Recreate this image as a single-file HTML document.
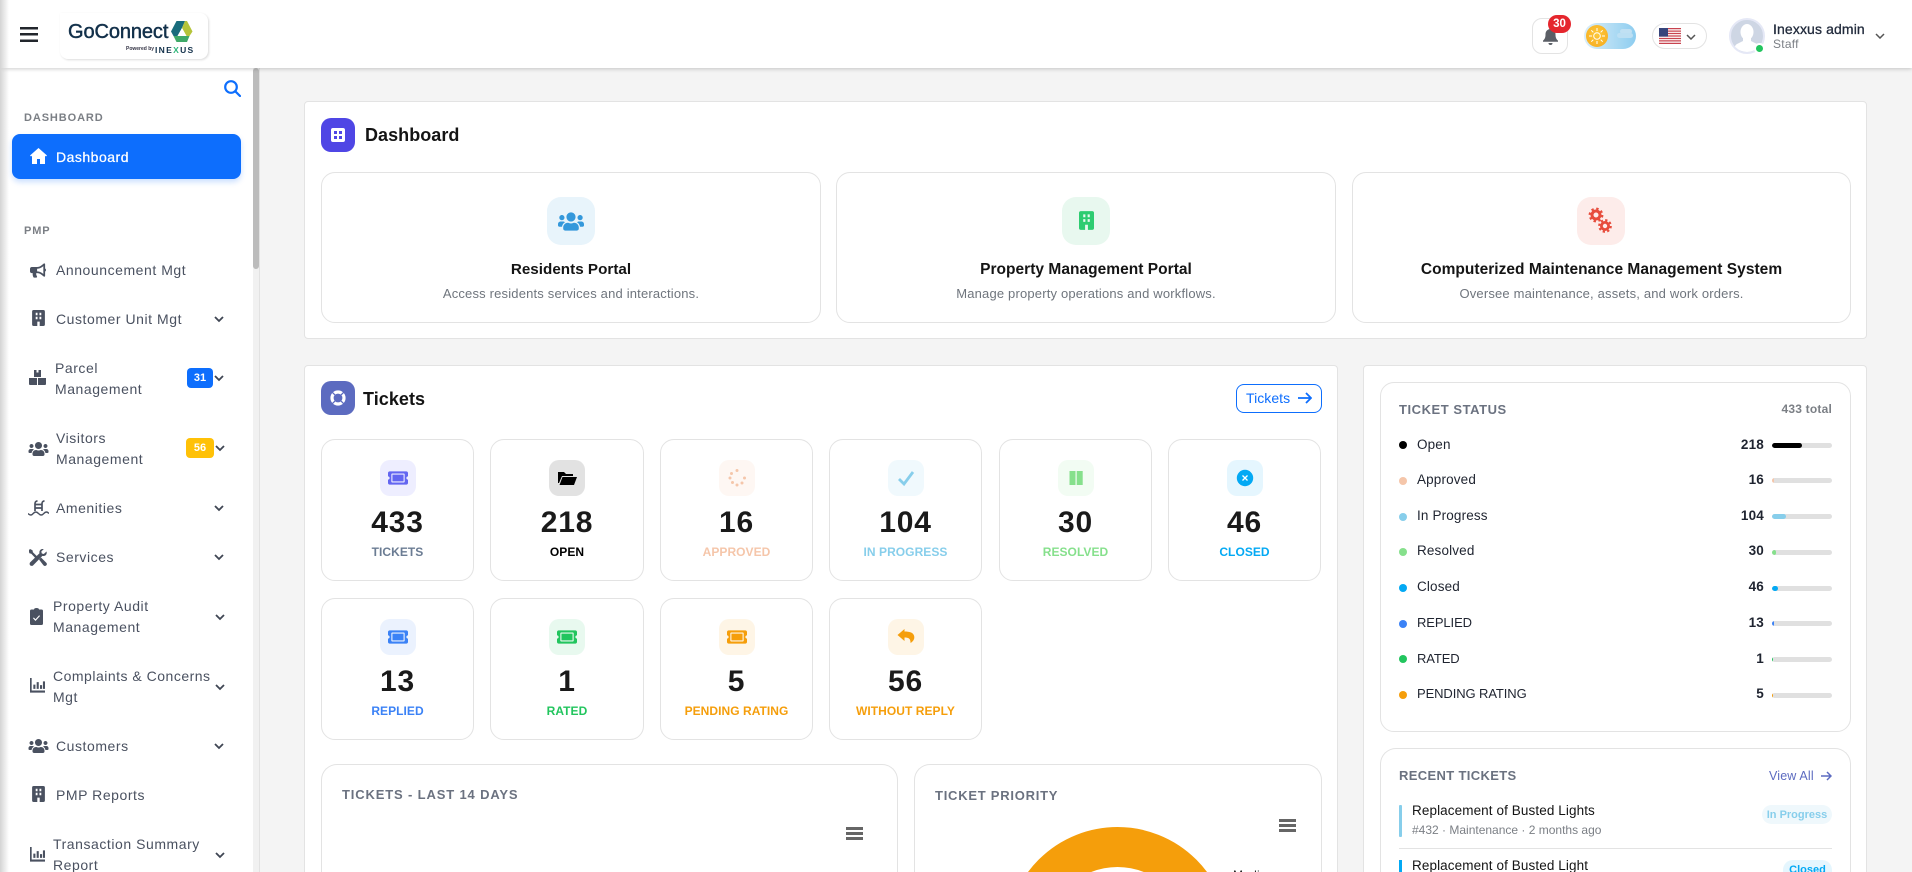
<!DOCTYPE html>
<html lang="en">
<head>
<meta charset="utf-8">
<title>GoConnect Dashboard</title>
<style>
*{box-sizing:border-box;margin:0;padding:0}
html,body{width:1912px;height:872px;overflow:hidden;background:#f4f4f4;font-family:"Liberation Sans",Arial,sans-serif;color:#111}
#root{position:relative;width:1912px;height:872px;overflow:hidden;background:#f4f4f4}
.a{position:absolute}
.t{position:absolute;white-space:nowrap}
#hd{position:absolute;left:0;top:0;width:1912px;height:68px;background:#fff;box-shadow:0 1px 4px rgba(0,0,0,.2);z-index:5}
#sb{position:absolute;left:0;top:68px;width:260px;height:804px;background:#fff;border-right:1px solid #e2e2e2}
#fade{position:absolute;left:0;top:0;width:9px;height:872px;background:linear-gradient(90deg,#d4d4d4,rgba(255,255,255,0));z-index:6}
.side{position:absolute;left:56px;font-size:14px;line-height:21px;color:#4a5160;letter-spacing:.55px;white-space:nowrap}
.sec{position:absolute;left:24px;font-size:11px;line-height:14px;font-weight:700;letter-spacing:.9px;color:#7b7f85}
.ic{position:absolute;fill:#4a5160}
.chev{position:absolute;width:12px;height:8px;fill:none;stroke:#3f4653;stroke-width:1.8}
.card{position:absolute;background:#fff;border:1px solid #e3e3e3;border-radius:4px}
.open{border-bottom:0;border-radius:4px 4px 0 0}
.in{position:absolute;background:#fff;border:1px solid #e3e3e3;border-radius:14px}
.in2{border-bottom:0;border-radius:16px 16px 0 0}
.ttl{position:absolute;font-size:18px;line-height:24px;font-weight:700;color:#141414;white-space:nowrap;letter-spacing:.05px}
.ibox{position:absolute;width:48px;height:48px;border-radius:14px;top:24px}
.pt{position:absolute;left:0;right:0;top:87px;text-align:center;font-size:15.5px;line-height:20px;font-weight:700;color:#141414;letter-spacing:.03px}
.pd{position:absolute;left:0;right:0;top:112px;text-align:center;font-size:13px;line-height:18px;color:#6f757d;letter-spacing:.18px}
.st{position:absolute;background:#fff;border:1px solid #e3e3e3;border-radius:14px;width:153px;height:142px;text-align:center}
.sb{position:absolute;top:20px;left:50%;margin-left:-18px;width:36px;height:36px;border-radius:10px}
.sb svg{position:absolute;left:8px;top:8px;width:20px;height:20px}
.n{position:absolute;left:0;right:0;top:65px;font-size:30px;line-height:36px;font-weight:700;color:#1a1a1a;letter-spacing:.8px}
.l{position:absolute;left:0;right:0;top:104px;font-size:12px;line-height:16px;font-weight:700;letter-spacing:.05px}
.h{position:absolute;font-size:13px;line-height:16px;font-weight:700;letter-spacing:.75px;color:#6b7280;white-space:nowrap}
.dot{position:absolute;left:1399px;width:8px;height:8px;border-radius:50%}
.rl{position:absolute;left:1417px;font-size:13.5px;line-height:18px;color:#1f2430;white-space:nowrap;letter-spacing:.15px}
.up{font-size:13px;letter-spacing:-.1px}
.rn{position:absolute;right:148px;font-size:13.5px;line-height:18px;font-weight:700;color:#1f2430;letter-spacing:.2px}
.bar{position:absolute;left:1772px;width:60px;height:5px;border-radius:3px;background:#e0e0e0;overflow:hidden}
.bar i{display:block;height:5px;border-radius:3px}
.menu{position:absolute;width:17px;height:13px;background:linear-gradient(#666 0 3px,transparent 3px 5px,#666 5px 8px,transparent 8px 10px,#666 10px 13px)}
</style>
</head>
<body>
<svg width="0" height="0" style="position:absolute">
<defs>
<symbol id="tk" viewBox="0 0 576 512"><path d="M128 160h320v192H128V160zm400 96c0 26.51 21.49 48 48 48v96c0 26.51-21.49 48-48 48H48c-26.51 0-48-21.49-48-48v-96c26.51 0 48-21.49 48-48s-21.49-48-48-48v-96c0-26.51 21.49-48 48-48h480c26.51 0 48 21.49 48 48v96c-26.51 0-48 21.49-48 48zm-48-104c0-13.255-10.745-24-24-24H120c-13.255 0-24 10.745-24 24v208c0 13.255 10.745 24 24 24h336c13.255 0 24-10.745 24-24V152z"/></symbol>
<symbol id="us" viewBox="0 0 640 512"><path d="M96 224c35.3 0 64-28.7 64-64s-28.7-64-64-64-64 28.7-64 64 28.7 64 64 64zm448 0c35.3 0 64-28.7 64-64s-28.7-64-64-64-64 28.7-64 64 28.7 64 64 64zm32 32h-64c-17.6 0-33.5 7.1-45.1 18.6 40.3 22.1 68.9 62 75.1 109.4h66c17.7 0 32-14.3 32-32v-32c0-35.3-28.7-64-64-64zm-256 0c61.9 0 112-50.1 112-112S381.9 32 320 32 208 82.1 208 144s50.1 112 112 112zm76.8 32h-8.3c-20.8 10-43.9 16-68.5 16s-47.6-6-68.5-16h-8.3C179.6 288 128 339.6 128 403.2V432c0 26.5 21.5 48 48 48h288c26.5 0 48-21.5 48-48v-28.8c0-63.6-51.6-115.2-115.2-115.2zm-223.7-13.4C161.5 263.1 145.6 256 128 256H64c-35.3 0-64 28.7-64 64v32c0 17.7 14.3 32 32 32h65.9c6.3-47.4 34.9-87.3 75.2-109.4z"/></symbol>
<symbol id="bd" viewBox="0 0 16 20"><path fill-rule="evenodd" d="M2 0h12a2 2 0 0 1 2 2v16a2 2 0 0 1-2 2H2a2 2 0 0 1-2-2V2a2 2 0 0 1 2-2zM4.500 3.500v3h2.300v-3zM9.200 3.500v3h2.300v-3zM4.500 8.500v3h2.300v-3zM9.200 8.500v3h2.300v-3zM6.500 14.500V20h3v-5.500z"/></symbol>
<symbol id="ch" viewBox="0 0 20 18"><path fill-rule="evenodd" d="M1 0h2v15h16v2.500H1z M5 8h2.500v5H5z M9 5h2.500v8H9z M13 8.500h2.500V13H13z M16.500 4H19v9h-2.500z"/></symbol>
</defs>
</svg>
<div id="root">

<!-- HEADER -->
<div id="hd">
  <div class="a" style="left:20px;top:27px;width:18px;height:15px;background:linear-gradient(#22262c 0 2.5px,transparent 2.5px 6px,#22262c 6px 8.5px,transparent 8.5px 12.5px,#22262c 12.5px 15px)"></div>
  <div class="a" style="left:60px;top:13px;width:148px;height:46px;background:#fff;border-radius:0 8px 8px 8px;box-shadow:1px 1px 2px rgba(0,0,0,.14)"></div>
  <div class="t" style="left:68px;top:18px;font-size:20px;line-height:28px;font-weight:400;color:#12304a;-webkit-text-stroke:.45px #12304a;letter-spacing:-.1px">GoConnect</div>
  <svg class="a" style="left:171px;top:21px" width="21.5" height="21" viewBox="0 0 21.5 21">
    <path d="M5.500 0H14L11 7 6.500 15H2.500L0 10.500z" fill="#186c7c"/>
    <path d="M14 0h2l5.500 10.500L18.500 15h-3L11 7z" fill="#b5c43a"/>
    <path d="M2.500 15h16L16 21H5.500z" fill="#3fa968"/>
    <path d="M11 7l4.500 8h-9z" fill="#fff"/>
  </svg>
  <div class="t" style="left:126px;top:46px;font-size:5px;line-height:7px;font-weight:700;color:#334">Powered by</div>
  <div class="t" style="left:155px;top:44px;font-size:8.500px;line-height:12px;font-weight:700;letter-spacing:1.3px;color:#12304a">INE<span style="color:#2fb67a">X</span>US</div>

  <div class="a" style="left:1532px;top:18px;width:36px;height:36px;border:1px solid #e3e3e3;border-radius:10px"></div>
  <svg class="a" style="left:1543px;top:28px" width="15" height="17" viewBox="0 0 15 17"><path d="M7.500 0c.8 0 1.300.6 1.300 1.300C11.300 1.900 12.500 4 12.500 6.500c0 3.500 1 4.800 2.500 6.200v1H0v-1c1.500-1.400 2.500-2.700 2.500-6.200 0-2.500 1.200-4.600 3.700-5.200C6.200.6 6.700 0 7.500 0z" fill="#5b5f66"/><path d="M5.500 15h4a2 2 0 0 1-4 0z" fill="#5b5f66"/></svg>
  <div class="a" style="left:1548px;top:15px;width:23px;height:18px;border-radius:9px;background:#e5262d;color:#fff;font-size:11.500px;line-height:18px;font-weight:700;text-align:center">30</div>

  <div class="a" style="left:1584px;top:23px;width:52px;height:26px;border-radius:13px;background:linear-gradient(90deg,#dbeef8,#8dcdf0)"></div>
  <div class="a" style="left:1586px;top:25px;width:22px;height:22px;border-radius:50%;background:radial-gradient(circle at 50% 40%,#fdc93a,#f6a91f)"></div>
  <svg class="a" style="left:1589px;top:28px" width="16" height="16" viewBox="0 0 16 16" fill="none" stroke="#fff" stroke-width="1"><circle cx="8" cy="8" r="3.300"/><path d="M8 0v3M8 13v3M0 8h3M13 8h3M2.300 2.300l2 2M11.700 11.700l2 2M2.300 13.700l2-2M11.700 4.300l2-2"/></svg>
  <div class="a" style="left:1620px;top:29px;width:12px;height:5px;border-radius:3px;background:#c0e0f3"></div>
  <div class="a" style="left:1617px;top:33px;width:16px;height:5px;border-radius:3px;background:#bcdff3"></div>

  <div class="a" style="left:1652px;top:23px;width:55px;height:26px;border:1px solid #e3e3e3;border-radius:13px"></div>
  <svg class="a" style="left:1659px;top:28px" width="22" height="16" viewBox="0 0 22 16">
    <rect width="22" height="16" rx="1" fill="#fff"/>
    <path d="M0 0h22v1.230H0zM0 2.460h22v1.230H0zM0 4.920h22v1.230H0zM0 7.380h22v1.230H0zM0 9.840h22v1.230H0zM0 12.300h22v1.230H0zM0 14.770h22V16H0z" fill="#c8434f"/>
    <rect width="9" height="8.600" fill="#37457c"/>
  </svg>
  <svg class="a" style="left:1686px;top:34px" width="10" height="6" viewBox="0 0 10 6" fill="none" stroke="#555" stroke-width="1.500"><path d="M1 1l4 4 4-4"/></svg>

  <div class="a" style="left:1729px;top:18px;width:36px;height:36px;border-radius:50%;background:#ced6e4;border:2px solid #e5e8f6;overflow:hidden">
    <svg width="32" height="32" viewBox="0 0 32 32" style="display:block"><ellipse cx="16" cy="12" rx="6.500" ry="8" fill="#fff"/><path d="M12 17h8v4l6 3c2 1 3 4 3 8H3c0-4 1-7 3-8l6-3z" fill="#fff"/></svg>
  </div>
  <div class="a" style="left:1754px;top:43px;width:11px;height:11px;border-radius:50%;background:#22c55e;border:2px solid #fff"></div>
  <div class="t" style="left:1773px;top:19px;font-size:14px;line-height:20px;font-weight:400;color:#222b3c;-webkit-text-stroke:.3px #222b3c;letter-spacing:.12px">Inexxus admin</div>
  <div class="t" style="left:1773px;top:36px;font-size:12px;line-height:16px;color:#7b7f85;letter-spacing:.25px">Staff</div>
  <svg class="a" style="left:1875px;top:33px" width="10" height="6" viewBox="0 0 10 6" fill="none" stroke="#555" stroke-width="1.500"><path d="M1 1l4 4 4-4"/></svg>
</div>

<!-- SIDEBAR -->
<div id="sb"></div>
<div class="a" style="left:253px;top:68px;width:6px;height:804px;background:#f1f1f1"></div>
<div class="a" style="left:253px;top:68px;width:6px;height:201px;background:#bcbcbc;border-radius:3px"></div>
<svg class="a" style="left:224px;top:80px" width="17" height="17" viewBox="0 0 17 17" fill="none" stroke="#0d6efd" stroke-width="2.200"><circle cx="7" cy="7" r="5.800"/><path d="M11.300 11.300L16 16" stroke-linecap="round"/></svg>
<div class="sec" style="top:111px">DASHBOARD</div>
<div class="a" style="left:12px;top:134px;width:229px;height:45px;border-radius:8px;background:#0d6efd;box-shadow:0 3px 6px rgba(13,110,253,.22)"></div>
<svg class="a" style="left:30px;top:148px" width="17" height="16" viewBox="0 0 17 16"><path fill-rule="evenodd" d="M8.500 0L17 7.500l-1 1L15 7.700V16H2V7.700L1 8.500l-1-1zM7 11v5h3v-5z" fill="#fff"/></svg>
<div class="t" style="left:56px;top:147px;font-size:14px;line-height:20px;color:#fff;-webkit-text-stroke:.25px #fff;letter-spacing:.5px">Dashboard</div>
<div class="sec" style="top:224px">PMP</div>

<svg class="ic" style="left:30px;top:263px" width="16" height="15" viewBox="0 0 576 512"><path d="M576 240c0-23.630-12.950-44.040-32-55.120V32.010C544 23.260 537.020 0 512 0c-7.120 0-14.190 2.380-19.980 7.020l-85.030 68.030C364.280 109.190 310.660 128 256 128H64c-35.350 0-64 28.650-64 64v96c0 35.350 28.650 64 64 64h33.700c-1.390 10.480-2.180 21.140-2.180 32 0 39.770 9.260 77.350 25.560 110.940 5.190 10.690 16.520 17.060 28.400 17.060h74.280c26.050 0 41.690-29.840 25.900-50.560-16.400-21.520-26.150-48.360-26.150-77.440 0-11.110 1.620-21.790 4.410-32H256c54.660 0 108.280 18.810 150.980 52.950l85.030 68.030a32.023 32.023 0 0 0 19.980 7.020c24.920 0 32-22.780 32-32V295.130C563.050 284.040 576 263.630 576 240zm-96 141.420l-33.050-26.440C392.950 311.780 325.120 288 256 288v-96c69.120 0 136.950-23.780 190.950-66.980L480 98.580v282.840z"/></svg>
<div class="side" style="top:260px">Announcement Mgt</div>

<svg class="ic" style="left:32px;top:310px" width="13" height="16"><use href="#bd"/></svg>
<div class="side" style="top:309px">Customer Unit Mgt</div>
<svg class="chev" style="left:213px;top:315px" viewBox="0 0 12 8"><path d="M2 2l4 4 4-4"/></svg>

<svg class="ic" style="left:29px;top:369px" width="17" height="16" viewBox="0 0 17 16"><path d="M5 1h2.500v2.500h2V1H12v7H5zM0 9h8v7H1a1 1 0 0 1-1-1zM9 9h8v6a1 1 0 0 1-1 1H9z"/></svg>
<div class="side" style="top:358px;left:55px">Parcel<br>Management</div>
<div class="a" style="left:187px;top:368px;width:26px;height:20px;border-radius:4px;background:#0d6efd;color:#fff;font-size:11px;line-height:20px;font-weight:700;text-align:center">31</div>
<svg class="chev" style="left:213px;top:374px" viewBox="0 0 12 8"><path d="M2 2l4 4 4-4"/></svg>

<svg class="ic" style="left:28px;top:441px" width="21" height="16"><use href="#us"/></svg>
<div class="side" style="top:428px">Visitors<br>Management</div>
<div class="a" style="left:186px;top:438px;width:28px;height:20px;border-radius:4px;background:#ffc107;color:#fff;font-size:11px;line-height:20px;font-weight:700;text-align:center">56</div>
<svg class="chev" style="left:214px;top:444px" viewBox="0 0 12 8"><path d="M2 2l4 4 4-4"/></svg>

<svg class="a" style="left:28px;top:500px" width="21" height="16" viewBox="0 0 21 16" fill="none" stroke="#4a5160" stroke-width="1.700"><path d="M7 11V3.500C7 2 8 1 9.500 1M14 11V3.500C14 2 15 1 16.500 1M7 4.500h7M7 8h7"/><path d="M0 13.500c2 2 3.500 2 5.200 0s3.400-2 5.300 0 3.500 2 5.300 0 3.400-2 5.200 0" stroke-width="1.400"/></svg>
<div class="side" style="top:498px">Amenities</div>
<svg class="chev" style="left:213px;top:504px" viewBox="0 0 12 8"><path d="M2 2l4 4 4-4"/></svg>

<svg class="ic" style="left:29px;top:549px" width="18" height="17" viewBox="0 0 18 17"><path d="M1 0l2.500 1.200.4 2L9 8.300 7.200 10 2.300 4.700l-1.900-.4L-.5 1.500z"/><path d="M17.500 2.500l-2.700 2.500-2-.5-.5-2L14.800 0c-2.500-.7-5 1.500-4.300 4.300L1 13.500c-1.300 2.500 1 4.300 3 3l9.400-9.600c3 .7 5-2 4.100-4.400z"/><path d="M10 10.500l2-2 5.300 5.300c.9 1 .7 2-.2 2.700s-1.800.7-2.700-.2z"/></svg>
<div class="side" style="top:547px">Services</div>
<svg class="chev" style="left:213px;top:553px" viewBox="0 0 12 8"><path d="M2 2l4 4 4-4"/></svg>

<svg class="ic" style="left:30px;top:608px" width="13" height="17" viewBox="0 0 13 17"><path fill-rule="evenodd" d="M4 1.500C4 .6 5 0 6.500 0S9 .6 9 1.500h2.500A1.500 1.500 0 0 1 13 3v12.500a1.500 1.500 0 0 1-1.500 1.500h-10A1.500 1.500 0 0 1 0 15.500V3a1.500 1.500 0 0 1 1.500-1.500zM3.800 9.500l-.8.800L5.500 13l4.500-5-.8-.7-3.700 4z"/></svg>
<div class="side" style="top:596px;left:53px">Property Audit<br>Management</div>
<svg class="chev" style="left:214px;top:613px" viewBox="0 0 12 8"><path d="M2 2l4 4 4-4"/></svg>

<svg class="ic" style="left:29px;top:678px" width="17" height="15"><use href="#ch"/></svg>
<div class="side" style="top:666px;left:53px;letter-spacing:.5px">Complaints &amp; Concerns<br>Mgt</div>
<svg class="chev" style="left:214px;top:683px" viewBox="0 0 12 8"><path d="M2 2l4 4 4-4"/></svg>

<svg class="ic" style="left:28px;top:738px" width="21" height="16"><use href="#us"/></svg>
<div class="side" style="top:736px">Customers</div>
<svg class="chev" style="left:213px;top:742px" viewBox="0 0 12 8"><path d="M2 2l4 4 4-4"/></svg>

<svg class="ic" style="left:32px;top:786px" width="13" height="16"><use href="#bd"/></svg>
<div class="side" style="top:785px">PMP Reports</div>

<svg class="ic" style="left:29px;top:847px" width="17" height="15"><use href="#ch"/></svg>
<div class="side" style="top:834px;left:53px;height:38px;overflow:hidden">Transaction Summary<br>Report</div>
<svg class="chev" style="left:214px;top:851px" viewBox="0 0 12 8"><path d="M2 2l4 4 4-4"/></svg>

<div id="fade"></div>

<!-- DASHBOARD CARD -->
<div class="card" style="left:304px;top:101px;width:1563px;height:238px"></div>
<div class="a" style="left:321px;top:118px;width:34px;height:34px;border-radius:10px;background:#4f46e5"></div>
<svg class="a" style="left:331px;top:128px" width="14" height="14" viewBox="0 0 14 14"><path fill-rule="evenodd" d="M2 0h10a2 2 0 0 1 2 2v10a2 2 0 0 1-2 2H2a2 2 0 0 1-2-2V2a2 2 0 0 1 2-2zM3 3v3h3V3zM8 3v3h3V3zM3 8v3h3V8zM8 8v3h3V8z" fill="#fff"/></svg>
<div class="ttl" style="left:365px;top:123px">Dashboard</div>

<div class="in" style="left:321px;top:172px;width:500px;height:151px">
  <div class="ibox" style="left:225px;background:#e8f4fb"></div>
  <svg class="a" style="left:236px;top:38px" width="26" height="21" fill="#3498db"><use href="#us"/></svg>
  <div class="pt" style="font-size:15.2px">Residents Portal</div>
  <div class="pd">Access residents services and interactions.</div>
</div>
<div class="in" style="left:836px;top:172px;width:500px;height:151px">
  <div class="ibox" style="left:225px;background:#e8f8ef"></div>
  <svg class="a" style="left:242px;top:37px" width="15" height="21" fill="#2ecc71"><use href="#bd"/></svg>
  <div class="pt">Property Management Portal</div>
  <div class="pd">Manage property operations and workflows.</div>
</div>
<div class="in" style="left:1352px;top:172px;width:499px;height:151px">
  <div class="ibox" style="left:224px;background:#fdecea"></div>
  <svg class="a" style="left:235px;top:34px" width="26" height="27" viewBox="0 0 26 27" fill="none" stroke="#e74c3c">
    <circle cx="8" cy="8" r="4" stroke-width="3"/><circle cx="8" cy="8" r="6.300" stroke-width="2.200" stroke-dasharray="2.400 2.550"/>
    <circle cx="17" cy="19" r="3.600" stroke-width="2.800"/><circle cx="17" cy="19" r="5.800" stroke-width="2.100" stroke-dasharray="2.300 2.250"/>
  </svg>
  <div class="pt">Computerized Maintenance Management System</div>
  <div class="pd">Oversee maintenance, assets, and work orders.</div>
</div>

<!-- TICKETS CARD -->
<div class="card open" style="left:304px;top:365px;width:1034px;height:507px"></div>
<div class="a" style="left:321px;top:381px;width:34px;height:34px;border-radius:10px;background:#5c6bc0"></div>
<svg class="a" style="left:330px;top:390px" width="16" height="16" viewBox="0 0 16 16" fill="none" stroke="#fff"><circle cx="8" cy="8" r="6" stroke-width="3.200"/><path d="M2.300 2.300l3.400 3.400M13.700 2.300l-3.400 3.400M2.300 13.700l3.400-3.400M13.700 13.700l-3.400-3.400" stroke="#5c6bc0" stroke-width="1.300"/></svg>
<div class="ttl" style="left:363px;top:387px">Tickets</div>
<div class="a" style="left:1236px;top:384px;width:86px;height:29px;border:1px solid #0d6efd;border-radius:8px"></div>
<div class="t" style="left:1246px;top:388px;font-size:14px;line-height:20px;color:#0d6efd;letter-spacing:.05px">Tickets</div>
<svg class="a" style="left:1298px;top:392px" width="14" height="12" viewBox="0 0 14 12" fill="none" stroke="#0d6efd" stroke-width="1.800"><path d="M0 6h12.500M8 1l5 5-5 5"/></svg>

<div class="st" style="left:321px;top:439px"><div class="sb" style="background:#eeeeff"><svg fill="#6366f1"><use href="#tk"/></svg></div><div class="n">433</div><div class="l" style="color:#6b7c93">TICKETS</div></div>
<div class="st" style="left:490px;top:439px;width:154px"><div class="sb" style="background:#e2e2e2"><svg viewBox="0 0 20 20"><path d="M1 4h6l2 2h7v2H5L2 15H1z M5.500 9H20l-3 8H2.500z"/></svg></div><div class="n">218</div><div class="l" style="color:#000">OPEN</div></div>
<div class="st" style="left:660px;top:439px"><div class="sb" style="background:#fef7f3"><svg viewBox="0 0 20 20" fill="#f5c6aa"><circle cx="10" cy="2.500" r="1.500"/><circle cx="17.500" cy="10" r="1.500"/><circle cx="15" cy="15" r="1.500"/><circle cx="10" cy="17" r="1.500"/><circle cx="5.500" cy="14.500" r="1.500"/><circle cx="3" cy="10" r="1.500"/><circle cx="4.500" cy="5.500" r="1.500"/></svg></div><div class="n">16</div><div class="l" style="color:#f5c6aa">APPROVED</div></div>
<div class="st" style="left:829px;top:439px"><div class="sb" style="background:#f0f9fd"><svg viewBox="0 0 20 20" fill="none" stroke="#87ceeb" stroke-width="2.800"><path d="M3 11l5 5 9-12"/></svg></div><div class="n">104</div><div class="l" style="color:#87ceeb">IN PROGRESS</div></div>
<div class="st" style="left:999px;top:439px"><div class="sb" style="background:#f2fcf3"><svg viewBox="0 0 20 20" fill="#86e08c"><path d="M3.500 3h6v14h-6zM10.700 3h6v14h-6z"/></svg></div><div class="n">30</div><div class="l" style="color:#86e08c">RESOLVED</div></div>
<div class="st" style="left:1168px;top:439px"><div class="sb" style="background:#e5f6fe"><svg viewBox="0 0 20 20"><circle cx="10" cy="10" r="8.200" fill="#03a9f4"/><path d="M7.500 7.500l5 5M12.500 7.500l-5 5" stroke="#fff" stroke-width="1.300"/></svg></div><div class="n">46</div><div class="l" style="color:#03a9f4">CLOSED</div></div>

<div class="st" style="left:321px;top:598px"><div class="sb" style="background:#ebf2fe"><svg fill="#3b82f6"><use href="#tk"/></svg></div><div class="n">13</div><div class="l" style="color:#3b82f6">REPLIED</div></div>
<div class="st" style="left:490px;top:598px;width:154px"><div class="sb" style="background:#e8f9ef"><svg fill="#22c55e"><use href="#tk"/></svg></div><div class="n">1</div><div class="l" style="color:#22c55e">RATED</div></div>
<div class="st" style="left:660px;top:598px"><div class="sb" style="background:#fef5e6"><svg fill="#f59e0b"><use href="#tk"/></svg></div><div class="n">5</div><div class="l" style="color:#f59e0b">PENDING RATING</div></div>
<div class="st" style="left:829px;top:598px"><div class="sb" style="background:#fef5e6"><svg viewBox="0 0 20 20"><path d="M8.500 2L1.500 8l7 6v-3.500c4 0 6.200 1 6 5.500 3-2 4.500-4.500 3.500-7.500-1-3-4.500-4-9.500-4z" fill="#f59e0b"/></svg></div><div class="n">56</div><div class="l" style="color:#f59e0b">WITHOUT REPLY</div></div>

<!-- CHART CARDS -->
<div class="in in2" style="left:321px;top:764px;width:577px;height:108px"></div>
<div class="h" style="left:342px;top:787px;letter-spacing:.85px">TICKETS - LAST 14 DAYS</div>
<div class="menu" style="left:846px;top:827px"></div>

<div class="in in2" style="left:914px;top:764px;width:408px;height:108px"></div>
<div class="h" style="left:935px;top:788px">TICKET PRIORITY</div>
<div class="menu" style="left:1279px;top:819px"></div>
<div class="a" style="left:1005px;top:827px;width:224px;height:45px;overflow:hidden"><div class="a" style="left:.5px;top:0;width:223px;height:223px;border-radius:50%;border:40px solid #f59e0b"></div></div>
<div class="t" style="left:1233px;top:867px;height:5px;overflow:hidden;font-size:12px;line-height:16px;color:#222;letter-spacing:.2px">Medium</div>

<!-- RIGHT COLUMN -->
<div class="card open" style="left:1363px;top:365px;width:504px;height:507px"></div>
<div class="in" style="left:1380px;top:382px;width:471px;height:350px"></div>
<div class="h" style="left:1399px;top:402px;letter-spacing:.55px">TICKET STATUS</div>
<div class="t" style="right:80px;top:401px;font-size:12px;line-height:16px;font-weight:700;color:#7b7f85;letter-spacing:.2px">433 total</div>

<div class="dot" style="top:441px;background:#000"></div><div class="rl" style="top:436px">Open</div><div class="rn" style="top:436px">218</div><div class="bar" style="top:443px"><i style="width:30px;background:#000"></i></div>
<div class="dot" style="top:477px;background:#f5c6aa"></div><div class="rl" style="top:471px">Approved</div><div class="rn" style="top:471px">16</div><div class="bar" style="top:478px"><i style="width:2px;background:#f5c6aa"></i></div>
<div class="dot" style="top:513px;background:#87ceeb"></div><div class="rl" style="top:507px">In Progress</div><div class="rn" style="top:507px">104</div><div class="bar" style="top:514px"><i style="width:14px;background:#87ceeb"></i></div>
<div class="dot" style="top:548px;background:#86e08c"></div><div class="rl" style="top:542px">Resolved</div><div class="rn" style="top:542px">30</div><div class="bar" style="top:550px"><i style="width:4px;background:#86e08c"></i></div>
<div class="dot" style="top:584px;background:#03a9f4"></div><div class="rl" style="top:578px">Closed</div><div class="rn" style="top:578px">46</div><div class="bar" style="top:586px"><i style="width:6px;background:#03a9f4"></i></div>
<div class="dot" style="top:620px;background:#3b82f6"></div><div class="rl up" style="top:614px">REPLIED</div><div class="rn" style="top:614px">13</div><div class="bar" style="top:621px"><i style="width:2px;background:#3b82f6"></i></div>
<div class="dot" style="top:655px;background:#22c55e"></div><div class="rl up" style="top:650px">RATED</div><div class="rn" style="top:650px">1</div><div class="bar" style="top:657px"><i style="width:1px;background:#22c55e"></i></div>
<div class="dot" style="top:691px;background:#f59e0b"></div><div class="rl up" style="top:685px">PENDING RATING</div><div class="rn" style="top:685px">5</div><div class="bar" style="top:693px"><i style="width:1px;background:#f59e0b"></i></div>

<div class="in in2" style="left:1380px;top:748px;width:471px;height:124px"></div>
<div class="h" style="left:1399px;top:768px;letter-spacing:.35px">RECENT TICKETS</div>
<div class="t" style="left:1769px;top:768px;font-size:12.500px;line-height:16px;color:#5c6bc0;letter-spacing:.15px">View All</div>
<svg class="a" style="left:1821px;top:771px" width="11" height="10" viewBox="0 0 11 10" fill="none" stroke="#5c6bc0" stroke-width="1.500"><path d="M0 5h10M6 1l4 4-4 4"/></svg>

<div class="a" style="left:1399px;top:805px;width:3px;height:32px;background:#87ceeb;border-radius:1px"></div>
<div class="t" style="left:1412px;top:802px;font-size:13.500px;line-height:18px;color:#141414;letter-spacing:.1px">Replacement of Busted Lights</div>
<div class="t" style="left:1412px;top:822px;font-size:12px;line-height:16px;color:#7b7f85;letter-spacing:0">#432 · Maintenance · 2 months ago</div>
<div class="a" style="left:1762px;top:805px;width:70px;height:19px;border-radius:10px;background:#eff8fc;color:#87ceeb;font-size:11px;line-height:20px;font-weight:700;text-align:center">In Progress</div>
<div class="a" style="left:1399px;top:848px;width:433px;height:1px;background:#e3e3e3"></div>
<div class="a" style="left:1399px;top:860px;width:3px;height:12px;background:#03a9f4"></div>
<div class="t" style="left:1412px;top:857px;height:15px;overflow:hidden;font-size:13.500px;line-height:18px;color:#141414;letter-spacing:.1px">Replacement of Busted Light</div>
<div class="a" style="left:1783px;top:860px;width:49px;height:12px;overflow:hidden;border-radius:10px 10px 0 0;background:#e5f6fe;color:#03a9f4;font-size:11px;line-height:20px;font-weight:700;text-align:center">Closed</div>

</div>
</body>
</html>
